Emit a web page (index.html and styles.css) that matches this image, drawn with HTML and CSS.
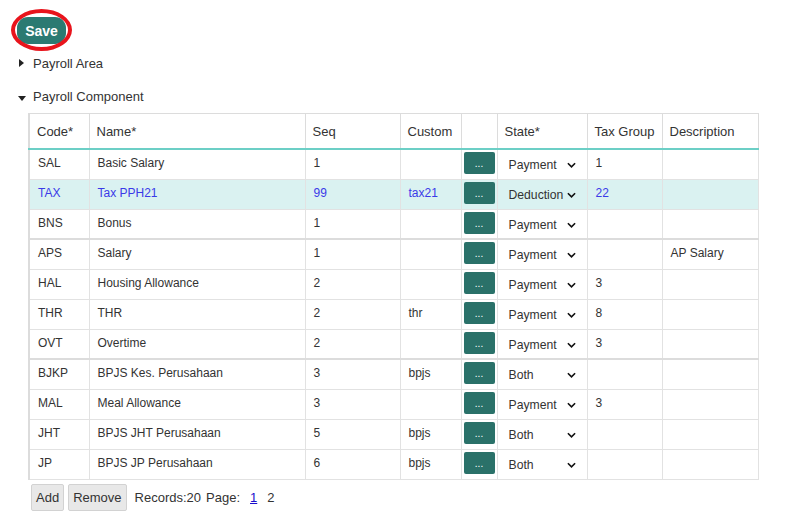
FILE: index.html
```html
<!DOCTYPE html>
<html>
<head>
<meta charset="utf-8">
<link rel="stylesheet" href="styles.css">
</head>
<body>
<div class="page">
  <div class="toolbar">
    <button class="save">Save</button>
    <span class="ring"></span>
  </div>
  <div class="section"><span class="tri-right"></span>Payroll Area</div>
  <div class="section open"><span class="tri-down"></span>Payroll Component</div>
  <table class="grid">
    <colgroup>
      <col class="c-code"><col class="c-name"><col class="c-seq"><col class="c-custom"><col class="c-btn"><col class="c-state"><col class="c-tax"><col class="c-desc">
    </colgroup>
    <thead>
      <tr><th>Code*</th><th>Name*</th><th>Seq</th><th>Custom</th><th></th><th>State*</th><th>Tax Group</th><th>Description</th></tr>
    </thead>
    <tbody>
      <tr><td>SAL</td><td>Basic Salary</td><td>1</td><td></td><td class="bc"><span class="dots">...</span></td><td class="sc"><span class="sel">Payment<svg viewBox="0 0 10 6"><path d="M1 1l4 4 4-4"/></svg></span></td><td>1</td><td></td></tr>
      <tr class="hl"><td>TAX</td><td>Tax PPH21</td><td>99</td><td>tax21</td><td class="bc"><span class="dots">...</span></td><td class="sc"><span class="sel">Deduction<svg viewBox="0 0 10 6"><path d="M1 1l4 4 4-4"/></svg></span></td><td>22</td><td></td></tr>
      <tr class="gend"><td>BNS</td><td>Bonus</td><td>1</td><td></td><td class="bc"><span class="dots">...</span></td><td class="sc"><span class="sel">Payment<svg viewBox="0 0 10 6"><path d="M1 1l4 4 4-4"/></svg></span></td><td></td><td></td></tr>
      <tr><td>APS</td><td>Salary</td><td>1</td><td></td><td class="bc"><span class="dots">...</span></td><td class="sc"><span class="sel">Payment<svg viewBox="0 0 10 6"><path d="M1 1l4 4 4-4"/></svg></span></td><td></td><td>AP Salary</td></tr>
      <tr><td>HAL</td><td>Housing Allowance</td><td>2</td><td></td><td class="bc"><span class="dots">...</span></td><td class="sc"><span class="sel">Payment<svg viewBox="0 0 10 6"><path d="M1 1l4 4 4-4"/></svg></span></td><td>3</td><td></td></tr>
      <tr><td>THR</td><td>THR</td><td>2</td><td>thr</td><td class="bc"><span class="dots">...</span></td><td class="sc"><span class="sel">Payment<svg viewBox="0 0 10 6"><path d="M1 1l4 4 4-4"/></svg></span></td><td>8</td><td></td></tr>
      <tr class="gend"><td>OVT</td><td>Overtime</td><td>2</td><td></td><td class="bc"><span class="dots">...</span></td><td class="sc"><span class="sel">Payment<svg viewBox="0 0 10 6"><path d="M1 1l4 4 4-4"/></svg></span></td><td>3</td><td></td></tr>
      <tr><td>BJKP</td><td>BPJS Kes. Perusahaan</td><td>3</td><td>bpjs</td><td class="bc"><span class="dots">...</span></td><td class="sc"><span class="sel">Both<svg viewBox="0 0 10 6"><path d="M1 1l4 4 4-4"/></svg></span></td><td></td><td></td></tr>
      <tr><td>MAL</td><td>Meal Allowance</td><td>3</td><td></td><td class="bc"><span class="dots">...</span></td><td class="sc"><span class="sel">Payment<svg viewBox="0 0 10 6"><path d="M1 1l4 4 4-4"/></svg></span></td><td>3</td><td></td></tr>
      <tr><td>JHT</td><td>BPJS JHT Perusahaan</td><td>5</td><td>bpjs</td><td class="bc"><span class="dots">...</span></td><td class="sc"><span class="sel">Both<svg viewBox="0 0 10 6"><path d="M1 1l4 4 4-4"/></svg></span></td><td></td><td></td></tr>
      <tr><td>JP</td><td>BPJS JP Perusahaan</td><td>6</td><td>bpjs</td><td class="bc"><span class="dots">...</span></td><td class="sc"><span class="sel">Both<svg viewBox="0 0 10 6"><path d="M1 1l4 4 4-4"/></svg></span></td><td></td><td></td></tr>
    </tbody>
  </table>
  <div class="footer">
    <button class="gbtn">Add</button>
    <button class="gbtn">Remove</button>
    <span class="rec">Records:20</span>
    <span class="pg">Page:</span>
    <a class="plink">1</a>
    <span class="pnum">2</span>
  </div>
</div>
</body>
</html>
```
FILE: styles.css
```css
html, body {
  margin: 0;
  padding: 0;
  background: #fff;
}
body {
  font-family: "Liberation Sans", Arial, sans-serif;
  font-size: 13px;
  color: #333;
}
.page {
  padding: 17px 0 0 17px;
}
.toolbar {
  position: relative;
  height: 27px;
}
.save {
  display: block;
  width: 49px;
  height: 27px;
  border: none;
  border-radius: 11px;
  background: #2b7a72;
  color: #fff;
  font-family: "Liberation Sans", Arial, sans-serif;
  font-size: 14px;
  font-weight: bold;
  padding: 0;
}
.ring {
  position: absolute;
  left: -6px;
  top: -8px;
  width: 53px;
  height: 34px;
  border: 4px solid #e8141c;
  border-radius: 50%;
}
.section {
  display: flex;
  align-items: center;
  height: 16px;
  margin-top: 11px;
  padding-left: 1px;
}
.section.open {
  margin-top: 17px;
}
.tri-right {
  width: 0;
  height: 0;
  border-top: 4px solid transparent;
  border-bottom: 4px solid transparent;
  border-left: 5px solid #222;
  margin-right: 9px;
  margin-left: 1px;
}
.tri-down {
  width: 0;
  height: 0;
  border-left: 4px solid transparent;
  border-right: 4px solid transparent;
  border-top: 5px solid #222;
  margin-right: 7px;
  margin-top: 5px;
}
.grid {
  margin-top: 9px;
  margin-left: 11px;
  border-collapse: collapse;
  table-layout: fixed;
  width: 730px;
  border: 1px solid #dcdcdc;
  border-left-width: 2px;
}
.c-code { width: 60px; }
.c-name { width: 216px; }
.c-seq { width: 95px; }
.c-custom { width: 61px; }
.c-btn { width: 36px; }
.c-state { width: 90px; }
.c-tax { width: 75px; }
.c-desc { width: 96px; }
.grid th {
  height: 34px;
  text-align: left;
  font-weight: normal;
  padding: 0 7px;
  border: 1px solid #dcdcdc;
  border-bottom: 2px solid #6ccfc6;
  color: #333;
  white-space: nowrap;
  overflow: hidden;
}
.grid td {
  height: 30px;
  box-sizing: border-box;
  padding: 6px 8px 0;
  vertical-align: top;
  border: 1px solid #e2e2e2;
  white-space: nowrap;
  font-size: 12px;
}
.grid tr.gend td {
  border-bottom: 2px solid #dcdcdc;
}
.grid tr.hl td {
  background: #daf2f1;
  color: #3a3ae8;
}
.grid tr.hl td.sc {
  color: #333;
}
.grid td.bc {
  padding: 2px 0 0 2px;
}
.dots {
  display: flex;
  align-items: center;
  justify-content: center;
  width: 31px;
  height: 22px;
  border-radius: 2px;
  background: #2a7169;
  color: #fff;
  font-size: 10px;
  line-height: 1;
  padding-top: 2px;
  box-sizing: border-box;
}
.grid td.sc {
  padding: 8px 0 0 11px;
  font-size: 12.2px;
}
.sel {
  display: flex;
  align-items: center;
  width: 67px;
}
.sel svg {
  width: 9px;
  height: 6px;
  margin-left: auto;
  flex: none;
  fill: none;
  stroke: #111;
  stroke-width: 1.8;
}
.footer {
  display: flex;
  align-items: center;
  margin-top: 4px;
  margin-left: 14px;
  height: 27px;
}
.gbtn {
  height: 27px;
  padding: 0 4px;
  margin-right: 4px;
  background: #e8e8e8;
  border: 1px solid #d2d2d2;
  border-radius: 2px;
  font-family: "Liberation Sans", Arial, sans-serif;
  font-size: 13px;
  color: #333;
}
.rec {
  margin-left: 4px;
}
.pg {
  margin-left: 5px;
}
.plink {
  color: #1a0dcc;
  text-decoration: underline;
  margin-left: 10px;
}
.pnum {
  margin-left: 10px;
}
```
